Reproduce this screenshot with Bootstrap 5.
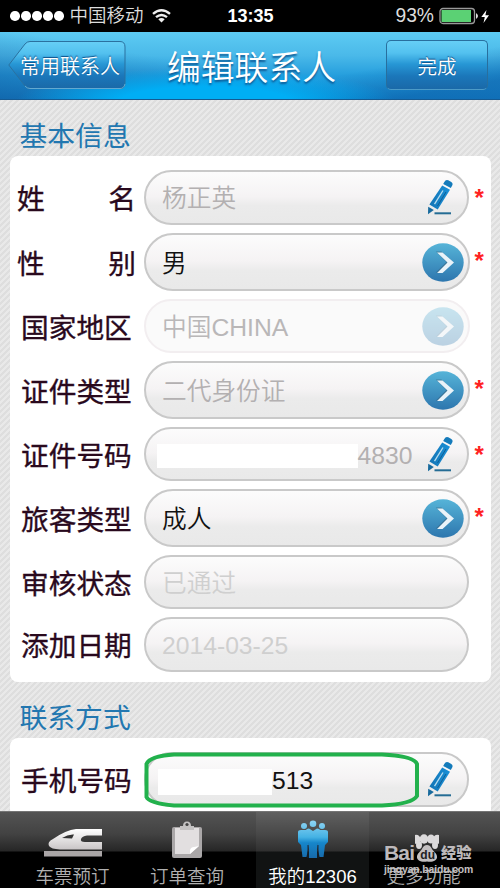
<!DOCTYPE html>
<html lang="zh-CN">
<head>
<meta charset="utf-8">
<meta name="viewport" content="width=device-width, initial-scale=1">
<title>编辑联系人</title>
<link href="https://cdn.jsdelivr.net/npm/bootstrap@5.3.0/dist/css/bootstrap.min.css" rel="stylesheet">
<style>
body{width:500px;height:888px;font-family:"Liberation Sans","Noto Sans CJK SC",sans-serif;line-height:1;background:#e5e5e5}
svg{display:block;flex:none}
.status-bar{height:32px;background:#000;color:#ddd;padding:0 9px 0 10px;display:grid;grid-template-columns:1fr auto 1fr}
.signal{gap:1.5px}
.signal i{width:9.5px;height:9.5px;border-radius:50%;background:#fff}
.carrier{font-size:18.5px;margin:1px 8px 0 6px;font-weight:350}
.clock{font-size:18px;font-weight:700;color:#fff}
.percent{font-size:19.3px;margin-right:5px}
.title-bar{height:68px;padding:8px 12px 9px 8px;color:#fff;border-bottom:1px solid #155a93;overflow:hidden;
 background:radial-gradient(ellipse 190px 34px at 205px 70px,#00aef5 45%,rgba(0,174,245,0) 100%),linear-gradient(170deg,rgba(255,255,255,0) 66%,rgba(10,80,155,.5) 88%),linear-gradient(10deg,rgba(15,80,150,.6),rgba(15,80,150,0) 45%),linear-gradient(#5dcbf3 0,#4ab9e9 35%,#259edd 65%,#168fd4 100%)}
.title-bar h1{font-size:33.8px;font-weight:350;line-height:48px;text-shadow:0 2px 2px #0d5a96;margin-right:9px}
.back-btn{width:118px;height:50px;position:relative;z-index:0;white-space:nowrap;font-size:20px;font-weight:350;line-height:54px;padding-left:12px;text-shadow:0 -1px 1px #0c4c85}
.back-btn svg{position:absolute;left:0;top:0;z-index:-1}
.done-btn{width:102px;height:50px;border:1px solid #286f9e;border-bottom-color:#4c9bc8;border-radius:5px;background:linear-gradient(#66cff6 0,#53c1ef 25%,#2797d5 48%,#1b77ba 73%,#1a69a8 100%);color:#fff;font-size:19.5px;font-weight:350;padding:5px 0 0;text-shadow:0 -1px 1px #0c4c85}
.content-area{height:711px;overflow:hidden;padding:0 9.5px;background:#e8e8e8 linear-gradient(135deg,#dedede 12.5%,#e9e9e9 12.5% 37.5%,#dedede 37.5% 62.5%,#e9e9e9 62.5% 87.5%,#dedede 87.5%) 0 0/6px 6px}
.section-name{font-size:27.8px;font-weight:400;color:#2277b0;height:56px;line-height:30px;padding:22px 0 0 10px;margin:0}
.panel{background:#fff;border-radius:8px;padding:14px 0 10px 0}
.panel .entry{height:55px;margin-bottom:8px}
.panel .entry.pick{height:58px}
.panel .entry.slim{height:54px}
.panel .entry:last-child{margin-bottom:0}
.caption{width:134.5px;flex:none;padding-left:11.5px;font-size:27.7px;line-height:30px;color:#29091d;font-weight:400;-webkit-text-stroke:.35px #29091d;white-space:nowrap;padding-top:5px}
.caption.spread{padding-left:7.5px;padding-right:8px;display:flex;justify-content:space-between}
.pill{width:325px;flex:none;align-self:stretch;border:2px solid #c9c9c9;border-radius:30px;background:linear-gradient(#fcfcfc 0,#f5f3f4 48%,#ebebeb 66%,#e9e9e9 100%);font-size:24.7px;font-weight:350;color:#b3b0b1;padding:0 14px 0 16px}
.pill>span{padding-top:4px}
.pick .pill{width:326px;padding-right:4px}
.pill.dark{color:#111}
.pill.faint{color:#cfcfcf}
.pill.off{border-color:#f2eef0;background:#fafafa;color:#b9b7b8}
.off svg{opacity:.3}
.pill .latin{font-weight:400}
.star{color:#f22;font-size:24px;font-weight:700;width:20px;padding:15px 0 0 5.5px;align-self:flex-start;line-height:26px}
.pick .star{padding-left:4.5px}
.blank{background:#fff;display:inline-block}
.id-no{margin-left:-5px}
.id-no .blank{width:200.5px;height:24.5px}
.phone-no{margin-left:-4px}
.phone-no .blank{width:114px;height:26px}
.phone-ring{position:absolute;left:-2px;top:-2px}
.tab-bar{height:77px;padding-left:27px;display:grid;grid-template-columns:91px 138px 113px 109px;border-top:1px solid #757575;background:linear-gradient(#545454 0,#424242 22px,#262626 39px,#000 40px);position:relative}
.tab-item{color:#b0b0b0;font-size:18.5px;font-weight:350;padding-top:8px;white-space:nowrap}
.tab-item svg{margin-bottom:10px}
.tab-item.current{color:#fff;background:linear-gradient(#606060 0,#484848 22px,#303030 39px,#111313 40px)}
.watermark{position:absolute;left:384px;top:22px;width:92px;color:#bdb9bb}
.wm-name{font-size:21px;font-weight:700;line-height:21px;height:29px;align-items:flex-end;white-space:nowrap}
.wm-bai{width:31px;letter-spacing:-.8px}
.wm-exp{font-size:15.3px;line-height:21px;margin-left:2px}
.wm-url{font-size:10.4px;font-weight:700;line-height:12px;letter-spacing:-.12px;white-space:nowrap;color:#c4c0c1;margin-top:1px}
</style>
<script src="https://cdn.jsdelivr.net/npm/bootstrap@5.3.0/dist/js/bootstrap.bundle.min.js"></script>
</head>
<body class="m-0 overflow-hidden">
<svg width="0" height="0" class="position-absolute">
 <defs>
  <linearGradient id="disc" x2="0" y2="1"><stop stop-color="#56b4d8"/><stop offset="1" stop-color="#2d76ae"/></linearGradient>
  <linearGradient id="pen" x2="1"><stop stop-color="#1374b5"/><stop offset="1" stop-color="#1a91d8"/></linearGradient>
  <linearGradient id="btn" x2="0" y2="1"><stop stop-color="#66cff6"/><stop offset=".25" stop-color="#53c1ef"/><stop offset=".48" stop-color="#2797d5"/><stop offset=".73" stop-color="#1b77ba"/><stop offset="1" stop-color="#1a69a8"/></linearGradient>
  <linearGradient id="crowd" gradientUnits="userSpaceOnUse" x1="0" y1="0" x2="0" y2="38"><stop stop-color="#90d5f4"/><stop offset=".45" stop-color="#45b2e4"/><stop offset=".6" stop-color="#1686ca"/><stop offset="1" stop-color="#176aab"/></linearGradient>
  <linearGradient id="silver" x2="0" y2="1"><stop stop-color="#fff"/><stop offset="1" stop-color="#c9c5c6"/></linearGradient>
  <symbol id="go" viewBox="0 0 42 39"><ellipse cx="21" cy="19.5" rx="20.7" ry="19.3" fill="url(#disc)"/><path d="M14.5 9H20L31.5 19.5L20 30H14.5L25 19.5Z" fill="#355f78" opacity=".55" transform="translate(-.6 -.6)"/><path d="M15 9.5H20.5L32 19.5L20.5 30H15L25.5 19.5Z" fill="#e9f3f9"/></symbol>
  <symbol id="edit" viewBox="0 0 26 37"><path d="M17.3 3Q18.7.2 21.3 1.3L24.3 2.9Q26.3 4.1 25.2 6.5L23.8 9L16.2 5Z" fill="#147bbb"/><path d="M15.2 6.5L23 10.7L10.7 30.5L2.4 25.6Z" fill="url(#pen)"/><path d="M16 11.5L7.5 25.2" stroke="#b9def0" stroke-width="1.3" fill="none"/><path d="M19 13L10.5 27" stroke="#0f5f96" stroke-width="1" fill="none"/><path d="M1.2 27.7L6.8 31L1 35.3Z" fill="#176a9d"/><path d="M7.5 34.3H24" stroke="#246c94" stroke-width="2"/></symbol>
 </defs>
</svg>

<header class="status-bar align-items-center">
 <div class="d-flex align-items-center">
  <div class="d-flex signal"><i></i><i></i><i></i><i></i><i></i></div>
  <span class="carrier">中国移动</span>
  <svg width="19" height="14" viewBox="0 0 19 14" fill="none" stroke="#eee" stroke-width="2.4"><path d="M1 4.9Q9.5-2.3 18 4.9M4 8.2Q9.5 3.6 15 8.2"/><path d="M6.3 10.3Q9.5 7.8 12.7 10.3L9.5 13.5Z" fill="#eee" stroke="none"/></svg>
 </div>
 <span class="clock">13:35</span>
 <div class="d-flex align-items-center justify-content-end">
  <span class="percent">93%</span>
  <svg width="52" height="18" viewBox="0 0 52 18"><rect x="1" y="1.5" width="34.5" height="15" rx="3" fill="none" stroke="#999" stroke-width="1.3"/><rect x="2.5" y="3" width="29.5" height="12" fill="#5bd174"/><path d="M37 6Q41 9 37 12Z" fill="#ddd"/><path d="M47.5 3L42.3 10H45.8L44.5 16L50 8.2H46.4Z" fill="#fff"/></svg>
 </div>
</header>

<nav class="title-bar d-flex justify-content-between align-items-start">
 <a class="back-btn text-white text-decoration-none" href="#"><svg width="118" height="50" viewBox="0 0 118 50"><path d="M.8 25L17 4Q19 1.5 22 1.5H112Q117 1.5 117 7V43Q117 48.5 112 48.5H22Q19 48.5 17 46Z" fill="url(#btn)" stroke="#2b719f"/><path d="M17 46Q19 48.5 22 48.5H112Q116 48.5 117 44" fill="none" stroke="#63a9d0"/></svg>常用联系人</a>
 <h1 class="mb-0 mt-1">编辑联系人</h1>
 <button type="button" class="done-btn">完成</button>
</nav>

<main class="content-area">
 <h2 class="section-name">基本信息</h2>
 <section class="panel">
  <div class="entry d-flex align-items-center"><div class="caption spread"><span>姓</span><span>名</span></div><div class="pill d-flex align-items-center justify-content-between"><span>杨正英</span><svg width="26" height="37"><use href="#edit"/></svg></div><span class="star">*</span></div>
  <div class="entry pick d-flex align-items-center"><div class="caption spread"><span>性</span><span>别</span></div><div class="pill dark d-flex align-items-center justify-content-between"><span>男</span><svg width="42" height="39"><use href="#go"/></svg></div><span class="star">*</span></div>
  <div class="entry pick slim d-flex align-items-center"><div class="caption">国家地区</div><div class="pill off d-flex align-items-center justify-content-between"><span>中国<span class="latin">CHINA</span></span><svg width="42" height="39"><use href="#go"/></svg></div></div>
  <div class="entry pick d-flex align-items-center"><div class="caption">证件类型</div><div class="pill d-flex align-items-center justify-content-between"><span>二代身份证</span><svg width="42" height="39"><use href="#go"/></svg></div><span class="star">*</span></div>
  <div class="entry slim d-flex align-items-center"><div class="caption">证件号码</div><div class="pill d-flex align-items-center justify-content-between"><span class="d-flex align-items-center id-no"><i class="blank"></i><span class="latin">4830</span></span><svg width="26" height="37"><use href="#edit"/></svg></div><span class="star">*</span></div>
  <div class="entry pick d-flex align-items-center"><div class="caption">旅客类型</div><div class="pill dark d-flex align-items-center justify-content-between"><span>成人</span><svg width="42" height="39"><use href="#go"/></svg></div><span class="star">*</span></div>
  <div class="entry slim d-flex align-items-center"><div class="caption">审核状态</div><div class="pill faint d-flex align-items-center"><span>已通过</span></div></div>
  <div class="entry d-flex align-items-center"><div class="caption">添加日期</div><div class="pill faint d-flex align-items-center"><span class="latin">2014-03-25</span></div></div>
 </section>
 <h2 class="section-name">联系方式</h2>
 <section class="panel">
  <div class="entry d-flex align-items-center"><div class="caption">手机号码</div><div class="pill dark position-relative d-flex align-items-center justify-content-between"><span class="d-flex align-items-center phone-no"><i class="blank"></i><span class="latin">513</span></span><svg width="26" height="37"><use href="#edit"/></svg><svg class="phone-ring" width="276" height="56" viewBox="0 0 276 56"><path d="M30 2.5H238Q270 4 273 12V44Q268 52 238 53.5H30Q5 51 2.5 45V12Q6 4 30 2.5Z" fill="none" stroke="#22b14c" stroke-width="4"/></svg></div></div>
 </section>
</main>

<footer class="tab-bar">
 <div class="tab-item d-flex flex-column align-items-center"><svg width="58" height="38" viewBox="0 0 58 38"><path d="M5 26Q3 22 9 19Q22 10 32 9H58V15.5H43Q38 16 37 19Q36 22 41 22H58V29.5H16Q7 29 5 26Z" fill="url(#silver)"/><path d="M18 18Q24 14 30 14.5L28 18.5Z" fill="#333"/><path d="M0 31H58V36.5H0Z" fill="#aaa6a7"/></svg><span>车票预订</span></div>
 <div class="tab-item d-flex flex-column align-items-center"><svg width="30" height="38" viewBox="0 0 30 38"><rect y="7" width="30" height="31" rx="2" fill="#aaa7a8"/><path d="M3 8H27V26L18 34H3Z" fill="#e2dfe0"/><path d="M27 26L18 34V30Q19 27 22 27Z" fill="#fff"/><path d="M8 10V6H11Q11 1.5 15 1.5T19 6H22V10Z" fill="#c4c2c2"/><circle cx="15" cy="4.5" r="1.6" fill="#444"/></svg><span>订单查询</span></div>
 <div class="tab-item current d-flex flex-column align-items-center"><svg width="30" height="38" viewBox="0 0 30 38" fill="url(#crowd)"><circle cx="6" cy="6" r="3"/><circle cx="24" cy="6" r="3"/><path d="M0 12Q0 10 3 10H8L11 24L8.5 37H4.5L3 25L0 22ZM30 12Q30 10 27 10H22L19 24L21.5 37H25.5L27 25L30 22Z"/><circle cx="15" cy="3.8" r="3.3"/><path d="M7.5 11Q8 8.5 11 8.5L15 11L19 8.5Q22 8.5 22.5 11L21.5 24L19 23V38H11V23L8.5 24Z"/><path d="M10 25V38M20 25V38" stroke="#16283a" stroke-width="1"/></svg><span>我的12306</span></div>
 <div class="tab-item d-flex flex-column align-items-center"><svg width="36" height="38" viewBox="0 0 36 38"></svg><span>更多功能</span></div>
 <div class="watermark">
  <div class="wm-name d-flex"><b class="wm-bai">Bai</b><svg width="24" height="29" viewBox="0 0 24 29"><g fill="#dcdadb"><circle cx="-1.5" cy="5.3" r="4.5" transform="translate(2.5 0)"/><ellipse cx="9" cy="5" rx="4.4" ry="4.7"/><ellipse cx="16" cy="5" rx="3.9" ry="4.6"/><circle cx="22.5" cy="5.3" r="4.5"/><ellipse cx="4" cy="11" rx="3" ry="4"/><ellipse cx="20" cy="11" rx="3" ry="4"/></g><path d="M12 11C16.500 11 16 15 19.500 18C25.500 24 20 29 12 27.500C4 29 -1.500 24 4.500 18C8 15 7.500 11 12 11Z" fill="#c4c0c1"/><text x="5.300" y="25" font-size="12" font-weight="700" font-family="Liberation Sans" fill="#222">du</text></svg><b class="wm-exp">经验</b></div>
  <div class="wm-url">jingyan.baidu.com</div>
 </div>
</footer>
</body>
</html>
